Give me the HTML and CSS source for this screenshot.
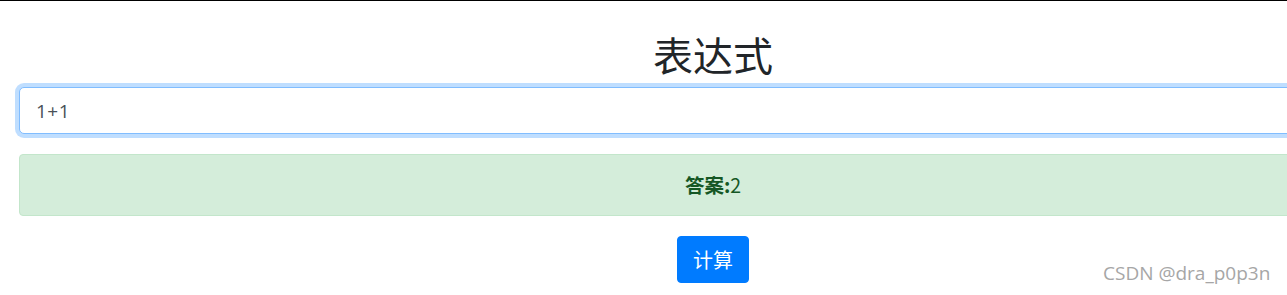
FILE: index.html
```html
<!DOCTYPE html>
<html lang="zh-CN">
<head>
<meta charset="utf-8">
<title>表达式</title>
<link rel="stylesheet" href="styles.css">
</head>
<body>
<div class="page">
  <div class="container">
    <h1 class="title">表达式</h1>
    <input class="expr" type="text" value="1+1">
    <div class="alert"><strong>答案:</strong>2</div>
    <div class="actions"><button class="btn" type="button">计算</button></div>
  </div>
  <div class="watermark">CSDN @dra_p0p3n</div>
</div>
</body>
</html>
```
FILE: styles.css
```css
html, body {
  margin: 0;
  padding: 0;
  background: #fff;
}
.page {
  position: relative;
  width: 1287px;
  height: 295px;
  overflow: hidden;
  border-top: 1px solid #000;
  box-sizing: border-box;
  font-family: "Noto Sans", "Noto Sans CJK SC", sans-serif;
  color: #212529;
}
.container {
  width: 1388px;
  margin-left: 19px;
  padding-top: 29px;
  display: flex;
  flex-direction: column;
}
.title {
  margin: 0 0 9px;
  font-family: "Noto Sans CJK SC", sans-serif;
  font-weight: 400;
  font-size: 40px;
  line-height: 48px;
  text-align: center;
  color: #212529;
}
.expr {
  display: block;
  box-sizing: border-box;
  width: 100%;
  height: 47px;
  margin: 0;
  padding: 8px 16px;
  font-family: "Open Sans", "Noto Sans CJK SC", sans-serif;
  font-size: 19px;
  letter-spacing: 0.5px;
  color: #495057;
  background: #fff;
  border: 1px solid #80bdff;
  border-radius: 5px;
  box-shadow: 0 0 0 4px rgba(0, 123, 255, 0.25);
  outline: none;
}
.alert {
  box-sizing: border-box;
  margin-top: 20px;
  height: 62px;
  padding: 15px 20px;
  font-family: "Noto Sans CJK SC", sans-serif;
  font-size: 19.5px;
  line-height: 30px;
  text-align: center;
  color: #155724;
  background: #d4edda;
  border: 1px solid #c3e6cb;
  border-radius: 4px;
}
.alert strong {
  font-weight: 700;
}
.actions {
  display: flex;
  justify-content: center;
  margin-top: 20px;
}
.btn {
  box-sizing: border-box;
  width: 72px;
  height: 47px;
  padding: 0;
  font-family: "Noto Sans CJK SC", sans-serif;
  font-size: 20px;
  line-height: 30px;
  color: #fff;
  background: #007bff;
  border: 1px solid #007bff;
  border-radius: 4px;
}
.watermark {
  position: absolute;
  left: 1103px;
  top: 259px;
  font-family: "Open Sans", sans-serif;
  font-size: 19px;
  line-height: 27px;
  color: #a6a6a6;
  white-space: nowrap;
}
```
